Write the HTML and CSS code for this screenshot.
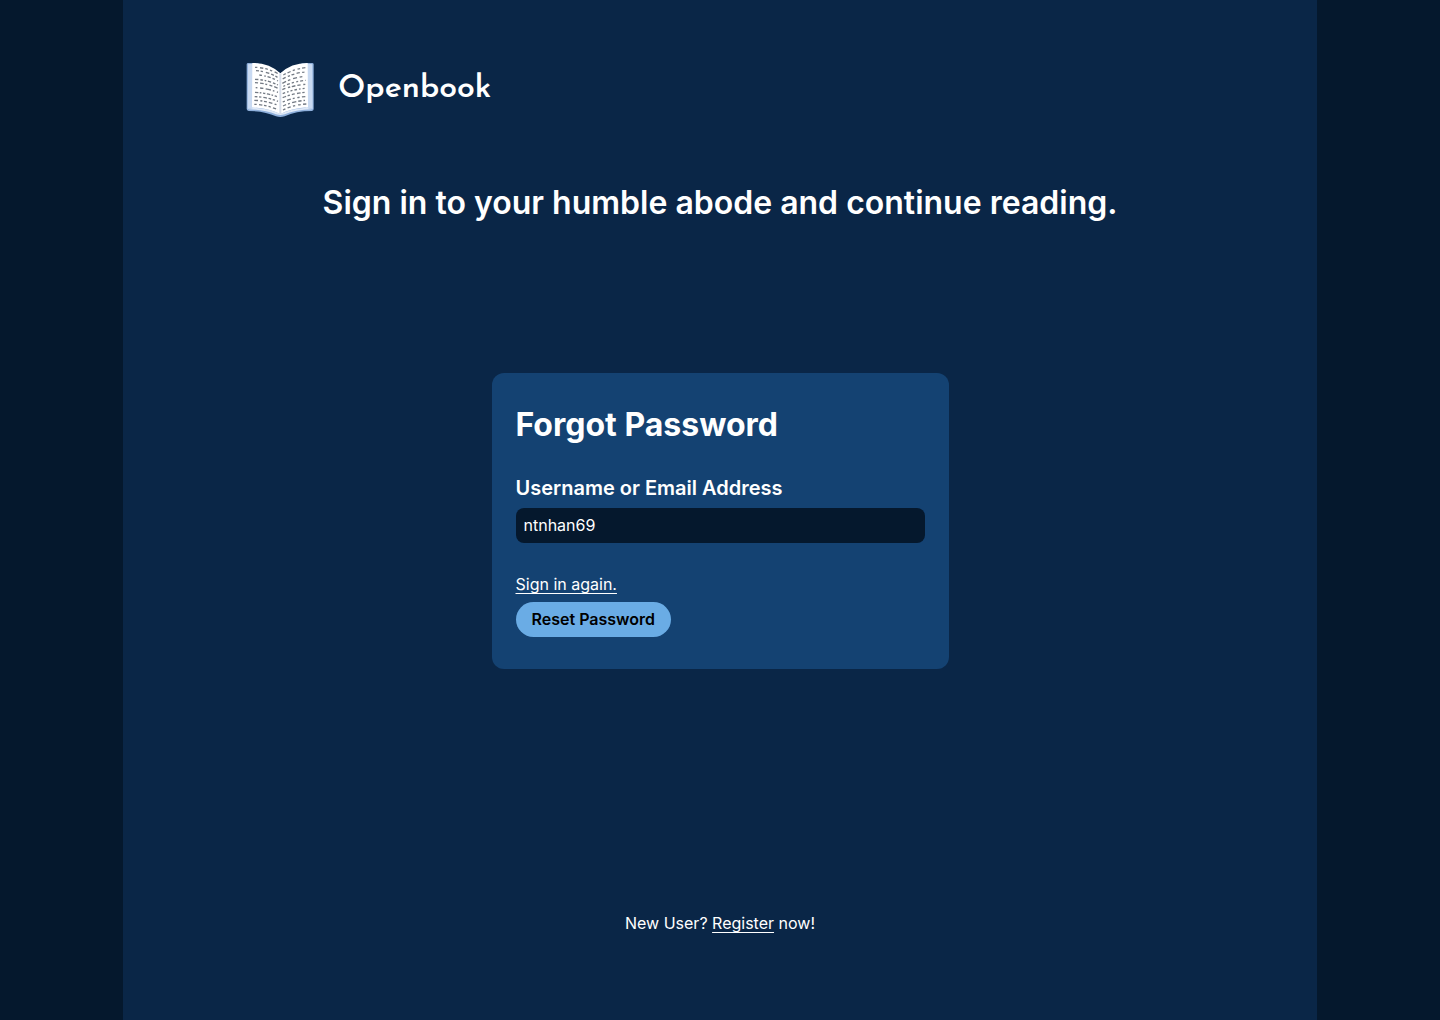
FILE: index.html
```html
<!DOCTYPE html>
<html lang="en">
<head>
<meta charset="utf-8">
<meta name="viewport" content="width=device-width, initial-scale=1">
<title>Openbook – Forgot Password</title>
<link rel="stylesheet" href="styles.css">
</head>
<body>
<div class="page">
  <header class="brand">
    <svg class="brand-icon" viewBox="18 6 204 204" aria-hidden="true">
      <path fill="#8fb0dc" d="M20 31q0-4 5-4l28 1 68 30 66-30 29-1q5 0 5 4v134q0 5-5 6-48 0-82 16-13 4-26 0-34-16-82-16-6-1-6-6z"/>
      <path fill="#c9daf2" d="M24 31l24-3v133l-25 4zM217 31l-20-3v133l21 4z"/>
      <path fill="#dfe9f7" d="M25 166l17-5q48 3 79 19 31-16 79-19l16 5q-50 1-82 15-13 4-26 0-33-14-83-15z"/>
      <path fill="#fff" d="M37 27q52 0 84 31v122q-31-17-85-20zM203 27q-50 0-82 31v122q31-17 83-20z"/>
      <path fill="#d7deea" d="M118 56l3 3 3-3v122l-3 3-3-3z"/>
      <g class="book-text">
        <path stroke-dasharray="7 8 10 6 8 7" d="M45 40q36 1 69 19"/>
        <path stroke-dasharray="9 5 7 9 11 6" d="M48 50q34 2 66 21"/>
        <path stroke-dasharray="8 7 5 5 10 6" d="M58 63q29 3 56 18"/>
        <path stroke-dasharray="10 6 8 5 5 5" d="M45 76q37 1 69 17"/>
        <path stroke-dasharray="9 6 11 5 6 7" d="M45 86q37 2 69 17"/>
        <path stroke-dasharray="5 8 10 7 16 6" d="M47 101q37 2 67 14"/>
        <path stroke-dasharray="10 4 5 5 7 5" d="M45 115q37 2 69 14"/>
        <path stroke-dasharray="8 5 7 6 11 5" d="M44 128q37 1 70 14"/>
        <path stroke-dasharray="11 7 6 5 9 6" d="M43 139q37 1 71 15"/>
        <path stroke-dasharray="7 7 10 5 8 6" d="M43 151q37 1 70 16"/>
        <path stroke-dasharray="8 6 10 7 7 8" d="M130 63q32-18 67-22"/>
        <path stroke-dasharray="10 7 7 5 9 7" d="M128 75q32-18 67-21"/>
        <path stroke-dasharray="12 6 8 9 12 8" d="M127 88q32-17 60-20"/>
        <path stroke-dasharray="6 6 9 6 7 7" d="M130 97q32-15 67-18"/>
        <path stroke-dasharray="10 8 7 5 11 6" d="M127 107q32-13 69-16"/>
        <path stroke-dasharray="8 6 5 6 6 6" d="M128 119q32-13 69-16"/>
        <path stroke-dasharray="11 5 7 6 9 7" d="M128 131q32-13 69-16"/>
        <path stroke-dasharray="7 7 12 6 6 8" d="M128 144q32-14 68-16"/>
        <path stroke-dasharray="10 6 6 7 13 6" d="M129 156q32-14 66-17"/>
        <path stroke-dasharray="8 7 10 7 7 9" d="M129 168q32-16 70-18"/>
      </g>
    </svg>
    <span class="brand-name">Openbook</span>
  </header>
  <h1 class="tagline">Sign in to your humble abode and continue reading.</h1>
  <main class="content">
    <form class="card">
      <h2 class="card-title">Forgot Password</h2>
      <label class="label" for="user">Username or Email Address</label>
      <input class="input" id="user" type="text" value="ntnhan69">
      <a class="link back-link" href="#">Sign in again.</a>
      <button class="button" type="submit">Reset Password</button>
    </form>
  </main>
  <footer class="footer">New User? <a class="link" href="#">Register</a> now!</footer>
</div>
</body>
</html>
```

FILE: styles.css
```css
* {
  box-sizing: border-box;
}

body {
  margin: 0;
  padding: 0 123px;
  background: #05182d;
  color: #fff;
  font: 16px/20px Inter, sans-serif;
}

.page {
  display: flex;
  flex-direction: column;
  min-height: 100vh;
  padding: 56px 24px 87px;
  background: #0a2647;
}

.brand {
  display: flex;
  align-items: center;
  gap: 24px;
  padding: 0 99px;
}

.brand-icon {
  width: 68px;
  height: 68px;
}

.book-text {
  fill: none;
  stroke: #737a84;
  stroke-width: 4;
}

.brand-name {
  padding-bottom: 2px;
  font: 600 32px/40px "Josefin Sans", Lato, sans-serif;
}

.tagline {
  margin: 59px 0 0;
  font-size: 32px;
  font-weight: 600;
  line-height: 40px;
  text-align: center;
}

.content {
  display: flex;
  flex: 1;
  align-items: center;
  justify-content: center;
  padding: 0 0 94px;
}

.card {
  display: flex;
  flex-direction: column;
  align-items: flex-start;
  width: 100%;
  max-width: 457px;
  padding: 32px 24px;
  border-radius: 12px;
  background: #144272;
}

.card-title {
  margin: 0 0 31px;
  font-size: 32px;
  font-weight: 700;
  line-height: 40px;
}

.label {
  margin-bottom: 8px;
  font-size: 20px;
  font-weight: 600;
  line-height: 24px;
}

.input {
  width: 100%;
  height: 35px;
  padding: 0 8px 1px;
  border: 0;
  border-radius: 8px;
  background: #05182d;
  color: #fff;
  font: inherit;
}

.link {
  color: inherit;
  text-decoration: underline;
  text-underline-offset: 3px;
}

.back-link {
  margin: 31px 0 8px;
}

.button {
  height: 35px;
  padding: 0 16px 1px;
  border: 0;
  border-radius: 18px;
  background: #6aace5;
  color: #000;
  font: inherit;
  font-weight: 600;
}

.footer {
  text-align: center;
}
```
